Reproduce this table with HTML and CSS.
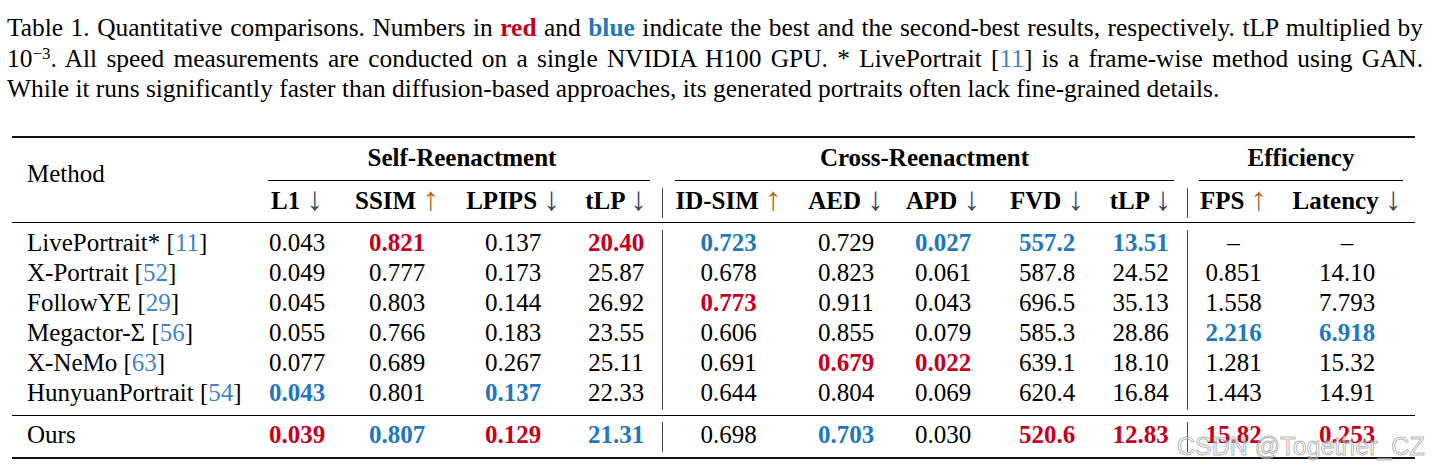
FILE: index.html
```html
<!DOCTYPE html>
<html lang="en">
<head>
<meta charset="utf-8">
<title>Table 1. Quantitative comparisons</title>
<link rel="stylesheet" href="styles.css">
</head>
<body>
<figure class="figure">
  <figcaption class="caption">
    <span class="line justify">Table 1. Quantitative comparisons. Numbers in <b class="red">red</b> and <b class="blue">blue</b> indicate the best and the second-best results, respectively. tLP multiplied by</span>
    <span class="line justify">10<sup class="sup">−3</sup>. All speed measurements are conducted on a single NVIDIA H100 GPU. * LivePortrait [<span class="cite">11</span>] is a frame-wise method using GAN.</span>
    <span class="line">While it runs significantly faster than diffusion-based approaches, its generated portraits often lack fine-grained details.</span>
  </figcaption>

  <div class="table">
    <div class="rule thick top"></div>

    <div class="grid head">
      <div class="method">Method</div>
      <div class="group g-self">Self-Reenactment</div>
      <div class="group g-cross">Cross-Reenactment</div>
      <div class="group g-eff">Efficiency</div>
      <div class="cmid c-self"></div>
      <div class="cmid c-cross"></div>
      <div class="cmid c-eff"></div>
      <div class="hc">L1 <span class="dn">↓</span></div>
      <div class="hc">SSIM <span class="up">↑</span></div>
      <div class="hc">LPIPS <span class="dn">↓</span></div>
      <div class="hc pl">tLP <span class="dn">↓</span></div>
      <div class="hc vb">ID-SIM <span class="up">↑</span></div>
      <div class="hc">AED <span class="dn">↓</span></div>
      <div class="hc">APD <span class="dn">↓</span></div>
      <div class="hc">FVD <span class="dn">↓</span></div>
      <div class="hc pr">tLP <span class="dn">↓</span></div>
      <div class="hc vb">FPS <span class="up">↑</span></div>
      <div class="hc">Latency <span class="dn">↓</span></div>
    </div>

    <div class="rule mid1"></div>

    <div class="grid rows body">
      <div>LivePortrait* [<span class="cite">11</span>]</div>
      <div>0.043</div><div class="red">0.821</div><div>0.137</div><div class="red">20.40</div>
      <div class="blue">0.723</div><div>0.729</div><div class="blue">0.027</div><div class="blue">557.2</div><div class="blue">13.51</div>
      <div>–</div><div>–</div>

      <div>X-Portrait [<span class="cite">52</span>]</div>
      <div>0.049</div><div>0.777</div><div>0.173</div><div>25.87</div>
      <div>0.678</div><div>0.823</div><div>0.061</div><div>587.8</div><div>24.52</div>
      <div>0.851</div><div>14.10</div>

      <div>FollowYE [<span class="cite">29</span>]</div>
      <div>0.045</div><div>0.803</div><div>0.144</div><div>26.92</div>
      <div class="red">0.773</div><div>0.911</div><div>0.043</div><div>696.5</div><div>35.13</div>
      <div>1.558</div><div>7.793</div>

      <div>Megactor-Σ [<span class="cite">56</span>]</div>
      <div>0.055</div><div>0.766</div><div>0.183</div><div>23.55</div>
      <div>0.606</div><div>0.855</div><div>0.079</div><div>585.3</div><div>28.86</div>
      <div class="blue">2.216</div><div class="blue">6.918</div>

      <div>X-NeMo [<span class="cite">63</span>]</div>
      <div>0.077</div><div>0.689</div><div>0.267</div><div>25.11</div>
      <div>0.691</div><div class="red">0.679</div><div class="red">0.022</div><div>639.1</div><div>18.10</div>
      <div>1.281</div><div>15.32</div>

      <div>HunyuanPortrait [<span class="cite">54</span>]</div>
      <div class="blue">0.043</div><div>0.801</div><div class="blue">0.137</div><div>22.33</div>
      <div>0.644</div><div>0.804</div><div>0.069</div><div>620.4</div><div>16.84</div>
      <div>1.443</div><div>14.91</div>
    </div>

    <div class="rule mid2"></div>

    <div class="grid rows ours">
      <div>Ours</div>
      <div class="red">0.039</div><div class="blue">0.807</div><div class="red">0.129</div><div class="blue">21.31</div>
      <div>0.698</div><div class="blue">0.703</div><div>0.030</div><div class="red">520.6</div><div class="red">12.83</div>
      <div class="red">15.82</div><div class="red">0.253</div>
    </div>

    <div class="rule thick bottom"></div>
  </div>
</figure>
<div class="watermark">CSDN @Together_CZ</div>
</body>
</html>
```

FILE: styles.css
```css
html, body {
  margin: 0;
  padding: 0;
  background: #ffffff;
}

body {
  font-family: "Liberation Serif", "Times New Roman", serif;
  color: #000;
  width: 1432px;
  height: 472px;
  overflow: hidden;
}

.figure {
  margin: 0;
  padding: 0;
}

/* ---------- caption ---------- */
.caption {
  margin: 12px 0 0 7px;
  width: 1416px;
  font-size: 25.4px;
  line-height: 30.5px;
}

.caption .line {
  display: block;
  white-space: nowrap;
}

.caption .line.justify {
  text-align: justify;
  text-align-last: justify;
}

.sup {
  font-size: 17px;
  line-height: 0;
  vertical-align: 8px;
}

.red { color: #c5001d; font-weight: bold; }
.blue { color: #1f78bd; font-weight: bold; }
.cite { color: #3f84c8; }

/* ---------- table ---------- */
.table {
  margin: 32.5px 0 0 12px;
  width: 1403px;
  font-size: 25px;
}

.rule {
  height: 1px;
  background: #000;
}
.rule.thick { height: 2px; background: #111; }
.rule.top { margin-top: 0; }
.rule.mid1 { margin-top: 4px; }
.rule.mid2 { margin-top: 5px; }
.rule.bottom { margin-top: 5px; }

.grid {
  display: grid;
  grid-template-columns: 250px 70px 130px 102px 98px 132px 104px 90px 118px 81px 92px 136px;
}

.grid > div {
  box-sizing: border-box;
  line-height: 25px;
  height: 30px;
  padding-bottom: 5px;
  text-align: center;
  white-space: nowrap;
}

/* header */
.head {
  margin-top: 7px;
  grid-template-rows: 30px 13px 30px;
}

.head .method {
  grid-column: 1;
  grid-row: 1 / 4;
  height: auto;
  padding: 16px 0 0 15px;
  text-align: left;
}

.head .group {
  grid-row: 1;
  font-weight: bold;
}
.g-self { grid-column: 2 / 6; }
.g-cross { grid-column: 6 / 11; }
.g-eff { grid-column: 11 / 13; }

.head .cmid {
  grid-row: 2;
  align-self: start;
  height: 1px;
  padding: 0;
  margin-top: 5px;
  background: #000;
}
.c-self { grid-column: 2 / 6; margin-left: 6px; margin-right: 12px; }
.c-cross { grid-column: 6 / 11; margin-left: 13px; margin-right: 13px; }
.c-eff { grid-column: 11 / 13; margin-left: 12px; margin-right: 12px; }

.head .hc {
  grid-row: 3;
  font-weight: bold;
}
.head .hc.pl { padding-left: 6px; }
.head .hc.pr { padding-right: 12px; }
.head .hc.vb { border-left: 1px solid #4a4a4a; }

.up, .dn {
  font-weight: normal;
  font-family: "Liberation Serif", "DejaVu Serif", serif;
  font-size: 33px;
  line-height: 0;
  vertical-align: -1px;
}
.up { color: #b4651f; }
.dn { color: #33475f; }

/* body rows */
.body { margin-top: 7px; }
.ours { margin-top: 6px; }

.rows > div:nth-child(12n+1) {
  text-align: left;
  padding-left: 15px;
}
.rows > div:nth-child(12n+5) { padding-left: 6px; }
.rows > div:nth-child(12n+10) { padding-right: 12px; }
.rows > div:nth-child(12n+6),
.rows > div:nth-child(12n+11) {
  border-left: 1px solid #4a4a4a;
}

/* watermark */
.watermark {
  position: absolute;
  left: 1177px;
  top: 434px;
  font-family: "Liberation Sans", Arial, sans-serif;
  font-size: 25px;
  line-height: 25px;
  color: rgba(255, 255, 255, 0.45);
  -webkit-text-stroke: 1px rgba(140, 140, 140, 0.65);
  white-space: nowrap;
  pointer-events: none;
}
```
